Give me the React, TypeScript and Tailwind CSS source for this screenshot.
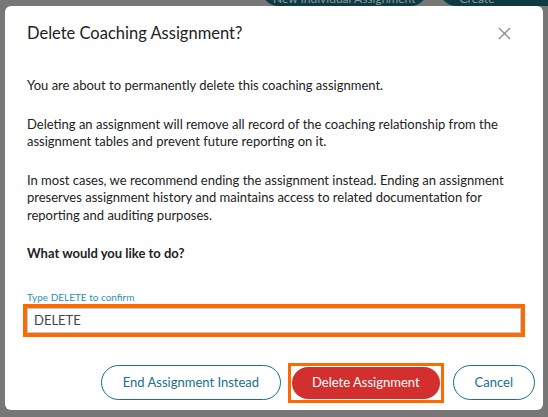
export default function App() {
  const font = { fontFamily: "Lato, 'Open Sans', sans-serif" };
  return (
    <div className="relative h-[417px] w-[548px] overflow-hidden bg-[#777777]" style={font}>
      {/* page behind the dimmed overlay */}
      <div className="flex h-[6px] items-end gap-[13px] pl-[262px]">
        <div className="flex h-[16px] w-[186px] items-end justify-center rounded-b-full bg-[#0e3a43] pb-[1px] text-[12px] leading-[13px] text-[#8a9a9c]">
          New Individual Assignment
        </div>
        <div className="flex h-[16px] w-[120px] items-end rounded-bl-full bg-[#0e3a43] pb-[1px] pl-[20px] text-[12px] leading-[13px] text-[#8a9a9c]">
          Create
        </div>
      </div>

      <div className="absolute left-[5px] top-[6px] flex h-[404px] w-[538px] flex-col rounded-[6px] bg-white px-[22px] text-[#222222]">
        <div className="flex h-[54px] items-center justify-between">
          <h2 className="text-[16.5px] font-normal">Delete Coaching Assignment?</h2>
          <button className="mr-[10px] text-[#8a8a8a]" aria-label="Close">
            <svg width="13" height="13" viewBox="0 0 14 14" fill="none" stroke="currentColor" strokeWidth="1.4">
              <path d="M1 1L13 13M13 1L1 13" />
            </svg>
          </button>
        </div>

        <div className="pt-[17px] text-[13px] leading-[17.5px]">
          <p className="mb-[21px]">You are about to permanently delete this coaching assignment.</p>
          <p className="mb-[21px]">
            Deleting an assignment will remove all record of the coaching relationship from the
            assignment tables and prevent future reporting on it.
          </p>
          <p className="mb-[21px]">
            In most cases, we recommend ending the assignment instead. Ending an assignment
            preserves assignment history and maintains access to related documentation for
            reporting and auditing purposes.
          </p>
          <p className="font-bold">What would you like to do?</p>
        </div>

        <label className="mt-[28px] block text-[10px] leading-[12px] text-[#2f8fb0]">Type DELETE to confirm</label>
        <div className="-mx-[4px] mt-[1px] border-[4px] border-[#ff6a00]">
          <input
            readOnly
            value="DELETE"
            className="block h-[25px] w-full border border-[#a9cfe6] px-[6px] text-[13px] text-[#444444] outline-none"
            style={font}
          />
        </div>

        <div className="-mr-[14px] mt-[26px] flex items-center justify-end">
          <button className="h-[35px] rounded-full border-[1.5px] border-[#19708a] px-[21px] text-[13px] text-[#19708a]">
            End Assignment Instead
          </button>
          <div className="ml-[7px] border-[3px] border-[#ff6a00] p-[1px]">
            <button className="h-[32px] rounded-full bg-[#d32f2f] px-[20px] text-[13px] text-white">
              Delete Assignment
            </button>
          </div>
          <button className="ml-[9px] h-[35px] rounded-full border-[1.5px] border-[#19708a] px-[21px] text-[13px] text-[#19708a]">
            Cancel
          </button>
        </div>
      </div>
    </div>
  );
}
